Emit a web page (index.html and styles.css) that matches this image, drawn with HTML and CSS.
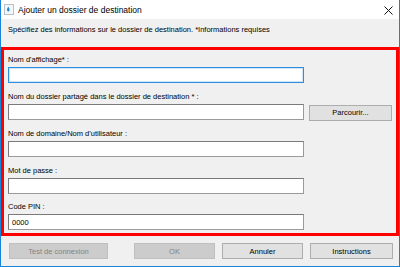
FILE: index.html
```html
<!DOCTYPE html>
<html lang="fr">
<head>
<meta charset="utf-8">
<title>Ajouter un dossier de destination</title>
<link rel="stylesheet" href="styles.css">
</head>
<body>
<div class="window">
  <div class="titlebar">
    <svg class="app-icon" width="10" height="11" viewBox="0 0 10 11">
      <rect x="0.5" y="0.5" width="9" height="10" fill="#f4f6f8" stroke="#b8c0c8"/>
      <path d="M3 5.5 C3 4.5 4 3.5 4.3 2.5 C4.6 3.5 5.6 4.5 5.6 5.8 C5.6 6.8 5 7.5 4.3 7.5 C3.6 7.5 3 6.8 3 5.5Z" fill="#1e88d8"/>
    </svg>
    <span class="title">Ajouter un dossier de destination</span>
    <svg class="close" width="9" height="9" viewBox="0 0 9 9">
      <path d="M0.5 0.5 L8.5 8.5 M8.5 0.5 L0.5 8.5" stroke="#111" stroke-width="1"/>
    </svg>
  </div>
  <div class="content">
    <p class="intro">Spécifiez des informations sur le dossier de destination. *Informations requises</p>
    <div class="highlight">
      <div class="field">
        <label class="label">Nom d'affichage* :</label>
        <input class="input focused" type="text">
      </div>
      <div class="field">
        <label class="label">Nom du dossier partagé dans le dossier de destination * :</label>
        <div class="input-row">
          <input class="input" type="text">
          <button class="btn browse">Parcourir...</button>
        </div>
      </div>
      <div class="field">
        <label class="label">Nom de domaine/Nom d'utilisateur :</label>
        <input class="input" type="text">
      </div>
      <div class="field">
        <label class="label">Mot de passe :</label>
        <input class="input" type="password">
      </div>
      <div class="field">
        <label class="label">Code PIN :</label>
        <input class="input" type="text" value="0000">
      </div>
    </div>
    <div class="footer">
      <button class="btn disabled test" disabled>Test de connexion</button>
      <div class="footer-right">
        <button class="btn disabled ok" disabled>OK</button>
        <button class="btn cancel">Annuler</button>
        <button class="btn instr">Instructions</button>
      </div>
    </div>
  </div>
</div>
</body>
</html>
```
FILE: styles.css
```css
* { box-sizing: border-box; }
html, body {
  margin: 0;
  padding: 0;
  background: #f0f0f0;
}
body {
  font-family: "Liberation Sans", Arial, sans-serif;
  font-size: 7.5px;
  color: #000;
}
.window {
  width: 400px;
  height: 267px;
  border: 1px solid #1883d7;
  border-top: none;
  background: #f0f0f0;
  display: flex;
  flex-direction: column;
}
.titlebar {
  height: 19px;
  background: #fff;
  display: flex;
  align-items: center;
  padding-left: 3px;
  padding-right: 6px;
}
.app-icon { flex: none; }
.title {
  margin-left: 4px;
  font-size: 8.5px;
  flex: 1;
}
.close { flex: none; margin-top: 2px; }
.content {
  flex: 1;
  display: flex;
  flex-direction: column;
}
.intro {
  margin: 0;
  padding: 5px 7px 0;
  height: 28px;
  line-height: 12px;
}
.highlight {
  border: 3px solid #ff0000;
  padding: 4px 0 3px 4px;
  display: flex;
  flex-direction: column;
  gap: 7.5px;
}
.field {
  display: flex;
  flex-direction: column;
}
.label {
  display: block;
  height: 12px;
  line-height: 12px;
  margin-bottom: 1px;
}
.input {
  width: 296px;
  height: 16px;
  margin: 0;
  padding: 0 3px;
  font-family: inherit;
  font-size: 7.5px;
  background: #fff;
  border: 1px solid #7a7a7a;
  border-right-color: #9a9a9a;
  border-bottom-color: #9a9a9a;
  outline: none;
}
.input.focused {
  border-color: #2f8ede;
  box-shadow: inset 0 0 0 1px #cfe4f7;
}
.input-row {
  display: flex;
  align-items: flex-start;
  gap: 5px;
}
.btn {
  height: 16px;
  margin: 0;
  padding: 0;
  font-family: inherit;
  font-size: 7.5px;
  color: #000;
  background: #e1e1e1;
  border: 1px solid #adadad;
}
.browse { width: 83px; height: 16px; margin-top: 1px; }
.footer {
  display: flex;
  justify-content: space-between;
  padding: 7px 6px 0 8px;
}
.footer-right {
  display: flex;
  gap: 7px;
}
.btn.disabled {
  background: #cccccc;
  border-color: #bfbfbf;
  color: #838383;
}
.test { width: 99px; }
.ok { width: 81px; }
.cancel { width: 81px; }
.instr { width: 83px; }
```
